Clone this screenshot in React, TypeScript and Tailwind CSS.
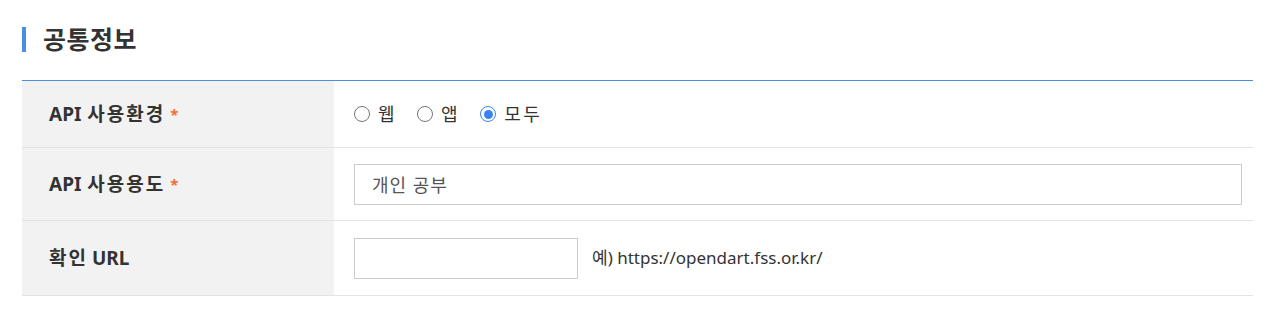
import React from "react";

const font = { fontFamily: '"Noto Sans", "Noto Sans CJK KR", sans-serif' };

function Radio({ checked, label }: { checked?: boolean; label: string }) {
  return (
    <label className="flex items-center gap-[8px] text-[18px] tracking-[2.5px] text-[#333]">
      <span
        className={
          checked
            ? "flex h-[16px] w-[16px] items-center justify-center rounded-full border-[1.5px] border-[#3b82f6]"
            : "h-[16px] w-[16px] rounded-full border-[1.5px] border-[#767676]"
        }
      >
        {checked && <span className="h-[9px] w-[9px] rounded-full bg-[#3b82f6]" />}
      </span>
      <span>{label}</span>
    </label>
  );
}

function Label({ latin, ko, after, req }: { latin?: string; ko: string; after?: string; req?: boolean }) {
  return (
    <div className="flex w-[312px] shrink-0 items-center bg-[#f2f2f2] pl-[27px] text-[19px] font-bold text-[#333]">
      {latin && <span className="mr-[6px]">{latin}</span>}
      <span className="tracking-[2px]">{ko}</span>
      {after && <span className="ml-[4px]">{after}</span>}
      {req && <span className="ml-[5px] text-[15px] text-[#f26c35]">*</span>}
    </div>
  );
}

export default function App() {
  return (
    <div className="bg-white px-[22px] pt-[24px]" style={font}>
      <div className="flex items-center">
        <span className="h-[25px] w-[4px] bg-[#4a8fdf]" />
        <h2 className="ml-[17px] text-[25px] font-bold leading-[30px] tracking-[0.5px] text-[#333]">공통정보</h2>
      </div>
      <div className="mt-[26px] w-[1231px] border-t border-[#4a90e2]">
        <div className="flex h-[67px] border-b border-[#e3e3e3]">
          <Label latin="API" ko="사용환경" req />
          <div className="flex items-center gap-[20px] pl-[20px]">
            <Radio label="웹" />
            <Radio label="앱" />
            <Radio checked label="모두" />
          </div>
        </div>
        <div className="flex h-[73px] border-b border-[#e3e3e3]">
          <Label latin="API" ko="사용용도" req />
          <div className="flex items-center pl-[20px]">
            <input
              className="h-[41px] w-[888px] border border-[#cccccc] px-[17px] text-[18px] tracking-[1px] text-[#555] outline-none"
              style={font}
              defaultValue="개인 공부"
            />
          </div>
        </div>
        <div className="flex h-[75px] border-b border-[#e3e3e3]">
          <Label ko="확인" after="URL" />
          <div className="flex items-center pl-[20px]">
            <input className="h-[41px] w-[224px] border border-[#cccccc] outline-none" />
            <span className="ml-[14px] text-[17px] text-[#333]">예) https://opendart.fss.or.kr/</span>
          </div>
        </div>
      </div>
    </div>
  );
}
